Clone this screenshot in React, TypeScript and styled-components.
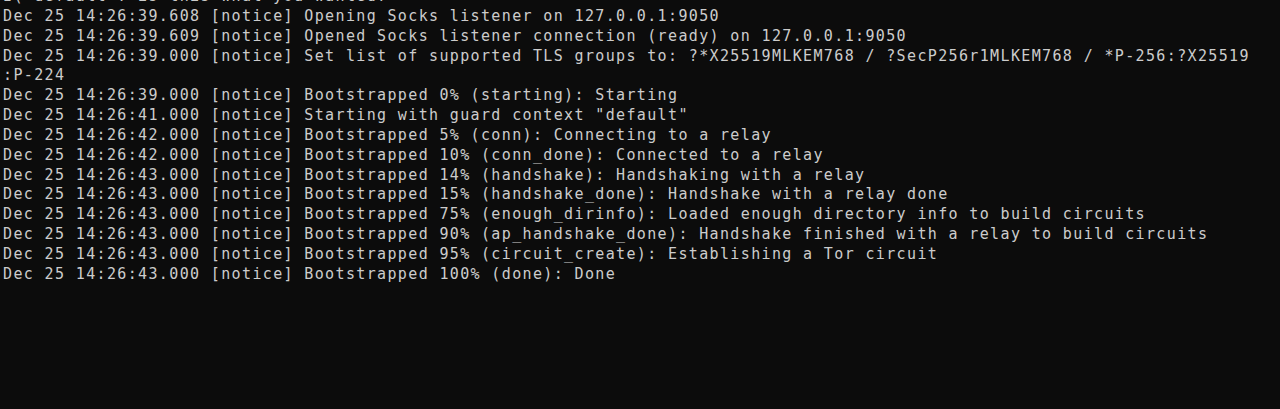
import React from 'react';
import styled, { createGlobalStyle } from "styled-components";

const lines = [
    'I( default ? is this what you wanted?',
    'Dec 25 14:26:39.608 [notice] Opening Socks listener on 127.0.0.1:9050',
    'Dec 25 14:26:39.609 [notice] Opened Socks listener connection (ready) on 127.0.0.1:9050',
    'Dec 25 14:26:39.000 [notice] Set list of supported TLS groups to: ?*X25519MLKEM768 / ?SecP256r1MLKEM768 / *P-256:?X25519',
    ':P-224',
    'Dec 25 14:26:39.000 [notice] Bootstrapped 0% (starting): Starting',
    'Dec 25 14:26:41.000 [notice] Starting with guard context "default"',
    'Dec 25 14:26:42.000 [notice] Bootstrapped 5% (conn): Connecting to a relay',
    'Dec 25 14:26:42.000 [notice] Bootstrapped 10% (conn_done): Connected to a relay',
    'Dec 25 14:26:43.000 [notice] Bootstrapped 14% (handshake): Handshaking with a relay',
    'Dec 25 14:26:43.000 [notice] Bootstrapped 15% (handshake_done): Handshake with a relay done',
    'Dec 25 14:26:43.000 [notice] Bootstrapped 75% (enough_dirinfo): Loaded enough directory info to build circuits',
    'Dec 25 14:26:43.000 [notice] Bootstrapped 90% (ap_handshake_done): Handshake finished with a relay to build circuits',
    'Dec 25 14:26:43.000 [notice] Bootstrapped 95% (circuit_create): Establishing a Tor circuit',
    'Dec 25 14:26:43.000 [notice] Bootstrapped 100% (done): Done',
];

function App() {
    return (
        <>
            <GlobalStyle/>
            <Terminal>
                <Output>
                    {lines.map((l, i) => <Line key={i}>{l}</Line>)}
                </Output>
            </Terminal>
        </>
    );
}

export default App;

const GlobalStyle = createGlobalStyle`
  html, body {
    margin: 0;
    padding: 0;
    background: #0c0c0c;
  }
`

const Terminal = styled.div`
  width: 1280px;
  height: 409px;
  overflow: hidden;
  background: #0c0c0c;
`

// scrolled terminal buffer, first row is cut by the top edge
const Output = styled.div`
  display: flex;
  flex-direction: column;
  margin-top: -13px;
  padding-left: 3px;
  font-family: "DejaVu Sans Mono", monospace;
  font-size: 15px;
  letter-spacing: 1.36px;
  color: #cccccc;
`

const Line = styled.div`
  height: 19.85px;
  line-height: 19.85px;
  white-space: pre;
`
